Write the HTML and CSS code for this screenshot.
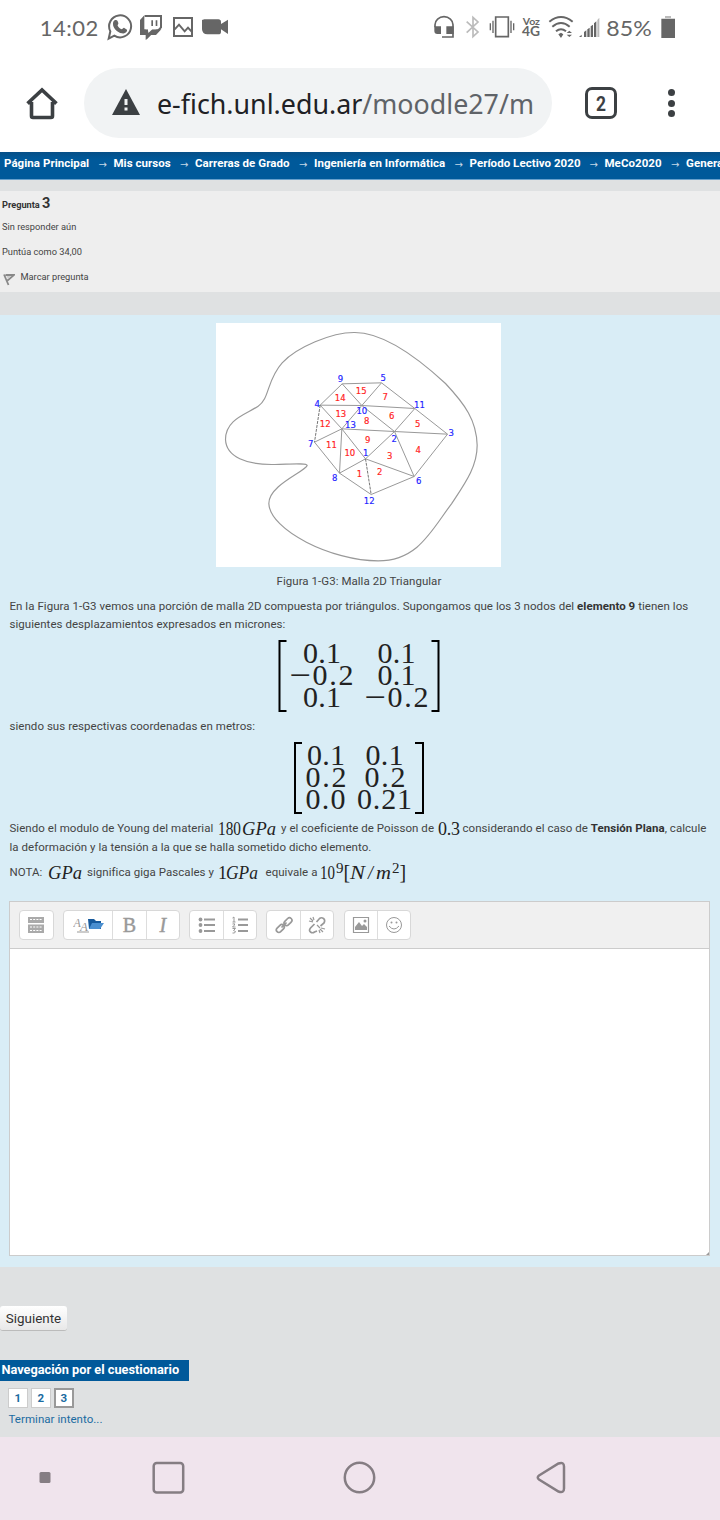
FILE: index.html
```html
<!DOCTYPE html>
<html lang="es">
<head>
<meta charset="utf-8">
<title>Cuestionario</title>
<link rel="stylesheet" href="styles.css">
</head>
<body>
<header class="status">
  <svg class="status-half" viewBox="0 0 1080 156">
    <text class="st" x="119" y="107" font-size="66" textLength="176">14:02</text>
    <g fill="none" stroke="#666" stroke-width="6">
      <path d="M326 116l5-22a33 33 0 1 1 12 13z"/>
      <path d="M522 54h54v54h-54z"/>
      <path d="M524 88l13-14 17 20 10-11 11 12"/>
      <path d="M434 48h49v34l-17 18h-13l-13 13v-13h-12"/>
    </g>
    <path fill="#666" d="M344 61c6-3 9 0 11 8 1 4-3 5-2 8 3 6 7 9 12 11 3 0 5-6 8-4l8 5c2 7-8 12-15 11-15-3-28-17-27-29 0-5 2-8 5-10zM420 60l13-14v42h12v11l12-11h27l-16 17h-15l-14 14v-14h-19zM606 60q6-1 7-2h42q8 0 8 8v6l21-13v43l-21-14v7q0 8-8 8h-33q-15 0-16-15z"/>
    <path fill="#fff" d="M437 51h42v27l-12 10h-14l-9 8v-8h-7z"/>
    <path fill="#666" d="M454 61h5v17h-5zM467 61h5v17h-5z"/>
  </svg>
  <svg class="status-half" viewBox="0 0 1080 156">
    <g fill="none" stroke="#666" stroke-width="5">
      <path d="M225 82v-8a27 24 0 0 1 54 0v37h-33"/>
      <path d="M407 51h38v59h-38z"/>
      <path d="M399 62v37M391 70v21M453 62v37M461 70v21" stroke-width="4"/>
      <path d="M568 65q35-28 70 0M577 80q26-22 52 0M588 94q15-13 30 0" stroke-width="6"/>
      <path stroke="#bbb" d="M320 65l34 31-15 14V52l15 14-34 32"/>
    </g>
    <path fill="#666" d="M223 79h20v23h-11q-9 0-9-9zM259 79h22v23h-22zM595 103l8-5 7 5-7 11zM620 99l8-7 8 7zM620 104h16l-8 7zM657 111l8-7v7zM672 111V96l7-5v20zM682 111V88l7-5v28zM692 111V79l7-5v37zM702 111V70l7-6v47zM904 56h41v58h-41z"/>
    <path fill="#bbb" d="M712 60l6-7v58h-6zM915 48h18v7h-18z"/>
    <text class="st b" x="488" y="74" font-size="28" textLength="52" lengthAdjust="spacingAndGlyphs">Voz</text>
    <text class="st b" x="486" y="108" font-size="42" textLength="54" lengthAdjust="spacingAndGlyphs">4G</text>
    <text class="st" x="739" y="107" font-size="66" textLength="136" lengthAdjust="spacingAndGlyphs">85%</text>
  </svg>
</header>
<div class="browser">
  <svg class="home" viewBox="0 0 36 36"><path d="M7.500 17V31q0 1.500 1.500 1.500h18q1.500 0 1.500-1.500V17M3.500 18.500L18 5 32.500 18.500M4 17.700h4M28 17.700h4" fill="none" stroke="#3c4043" stroke-width="3.600"/></svg>
  <div class="url">
    <svg class="warn" viewBox="0 0 28 26"><path fill="#3c4043" d="M14 0l14 26H0z"/><path stroke="#f1f3f4" stroke-width="3" d="M14 10v6M14 18.500v3"/></svg>
    <svg class="address" viewBox="0 0 380 40"><text x="0" y="31" font-size="26.500" textLength="377" lengthAdjust="spacingAndGlyphs"><tspan fill="#202124">e-fich.unl.edu.ar</tspan><tspan fill="#5f6368">/moodle27/m</tspan></text></svg>
  </div>
  <div class="tabs"><svg viewBox="0 0 10 17"><text x="0" y="15.500" textLength="10" lengthAdjust="spacingAndGlyphs">2</text></svg></div>
  <div class="dots"><i></i><i></i><i></i></div>
</div>
<nav class="crumbs">
  <span class="c1">Página Principal</span><b>→</b><span class="c2">Mis cursos</span><b>→</b><span class="c3">Carreras de Grado</span><b>→</b><span class="c4">Ingeniería en Informática</span><b>→</b><span class="c5">Período Lectivo 2020</span><b>→</b><span class="c6">MeCo2020</span><b>→</b><span>General</span>
</nav>
<section class="info">
  <h3>Pregunta <span>3</span></h3>
  <p>Sin responder aún</p>
  <p>Puntúa como 34,00</p>
  <p class="flag"><svg viewBox="0 0 12 13"><path d="M1 1.500L5.500 12M2.500 2h8.500L4.500 7.500" fill="none" stroke="#888" stroke-width="1.800"/><path d="M3.500 3h5l-3.500 3z" fill="#ccc"/></svg>Marcar pregunta</p>
</section>
<main class="question">
  <svg class="mesh" viewBox="3.500 9 855 731">
    <g fill="none" stroke="#999" stroke-width="3.500">
      <path d="M420 37C350 36 245 82 202 128C155 180 165 235 130 258C95 282 32 297 32 358C34 410 95 435 180 433C230 432 275 428 277 436C270 455 162 495 162 550C165 630 350 722 490 722C610 722 650 630 710 551C750 490 787 440 787 375C785 300 750 252 692 190C600 105 500 37 420 37Z"/>
      <path stroke-width="3" d="M382 191L500 188 600 265 698 342 598 469 469 523 374 459 299 366M316 255L382 191M316 255L441 256 600 265M382 191L441 256 500 188M441 256L381 326 316 255M381 326L539 334 698 342M441 256L539 334 600 265M299 366L381 326 374 459 452 416 381 326M452 416L539 334 598 469 452 416"/>
      <path stroke="#777" stroke-width="3" stroke-dasharray="9 3" d="M452 416l17 107M316 255l-17 111"/>
    </g>
    <g class="node">
      <text x="377" y="187">9</text><text x="505" y="184">5</text><text x="307" y="261">4</text><text x="441" y="283">10</text><text x="614" y="263">11</text><text x="407" y="324">13</text><text x="709" y="349">3</text><text x="538" y="367">2</text><text x="288" y="380">7</text><text x="453" y="408">1</text><text x="360" y="483">8</text><text x="612" y="491">6</text><text x="463" y="551">12</text>
    </g>
    <g class="elem">
      <text x="439" y="222">15</text><text x="376" y="242">14</text><text x="511" y="239">7</text><text x="378" y="291">13</text><text x="531" y="297">6</text><text x="456" y="311">8</text><text x="331" y="322">12</text><text x="609" y="322">5</text><text x="459" y="370">9</text><text x="350" y="383">11</text><text x="610" y="398">4</text><text x="405" y="409">10</text><text x="525" y="416">3</text><text x="495" y="466">2</text><text x="434" y="472">1</text>
    </g>
  </svg>
  <p class="caption">Figura 1-G3: Malla 2D Triangular</p>
  <p class="t1"><span class="l1">En la Figura 1-G3 vemos una porción de malla 2D compuesta por triángulos. Supongamos que los 3 nodos del <strong>elemento 9</strong> tienen los</span><br>siguientes desplazamientos expresados en micrones:</p>
  <svg class="matrix m1" viewBox="278 640 162 72">
    <path d="M286.500 641h-7v70h7M431.500 641h7v70h-7"/>
    <text x="303" y="662.700" textLength="38">0.1</text><text class="minus" x="290" y="685" textLength="21" lengthAdjust="spacingAndGlyphs">−</text><text x="312.500" y="685" textLength="41">0.2</text><text x="303" y="707.300" textLength="38">0.1</text>
    <text x="377.500" y="662.700" textLength="38">0.1</text><text x="377.500" y="685" textLength="38">0.1</text><text class="minus" x="365" y="707.300" textLength="21" lengthAdjust="spacingAndGlyphs">−</text><text x="387.500" y="707.300" textLength="41">0.2</text>
  </svg>
  <p class="t2">siendo sus respectivas coordenadas en metros:</p>
  <svg class="matrix m2" viewBox="294 742 130 72">
    <path d="M302 743h-7v70h7M415 743h8v70h-8"/>
    <text x="307" y="764.700" textLength="38">0.1</text><text x="305.500" y="787" textLength="41">0.2</text><text x="305.500" y="809.300" textLength="40">0.0</text>
    <text x="365.500" y="764.700" textLength="38">0.1</text><text x="364.500" y="787" textLength="41">0.2</text><text x="357" y="809.300" textLength="55">0.21</text>
  </svg>
  <p class="t3"><span class="s1">Siendo el modulo de Young del material</span><svg class="fx f1" viewBox="0 0 59 18"><text y="16" x="0" textLength="23" lengthAdjust="spacingAndGlyphs">180</text><text class="it" x="24" y="16" textLength="34" lengthAdjust="spacingAndGlyphs">GPa</text></svg><span class="s2">y el coeficiente de Poisson de</span><svg class="fx f2" viewBox="0 0 22 18"><text y="16" textLength="22">0.3</text></svg><span>considerando el caso de <strong>Tensión Plana</strong>, calcule</span></p>
  <p class="t4">la deformación y la tensión a la que se halla sometido dicho elemento.</p>
  <p class="t5"><span class="s3">NOTA:</span><svg class="fx f3" viewBox="0 0 34 18"><text class="it" y="16" textLength="34" lengthAdjust="spacingAndGlyphs">GPa</text></svg><span class="s4">significa giga Pascales y</span><svg class="fx f4" viewBox="0 0 41 18"><text y="16">1</text><text class="it" x="8" y="16" textLength="32" lengthAdjust="spacingAndGlyphs">GPa</text></svg><span class="s5">equivale a</span><svg class="fx f5" viewBox="0 0 86 24"><text y="20" textLength="15" lengthAdjust="spacingAndGlyphs">10</text><text class="sup" x="16" y="13.500">9</text><text class="br" x="23.500" y="20">[</text><text class="it" x="30" y="20" textLength="15" lengthAdjust="spacingAndGlyphs">N</text><text class="it" x="48" y="20">/</text><text class="it" x="56" y="20" textLength="15" lengthAdjust="spacingAndGlyphs">m</text><text class="sup" x="72" y="13.500">2</text><text class="br" x="79.500" y="20">]</text></svg></p>
  <div class="editor">
    <div class="tools">
      <div class="grp"><span><svg viewBox="0 0 18 18"><path fill="#aaa" d="M1 1h16v6H1zM1 8.500h16V17H1z"/><path stroke="#fff" stroke-dasharray="2 1.200" d="M3 3.500h12M3 11h12M3 14.500h12"/></svg></span></div>
      <div class="grp"><span class="wide"><svg class="font" viewBox="0 0 31 18"><text x="0.500" y="11" font-size="12" class="fa">A</text><text x="7" y="14.500" font-size="13" class="fa">A</text><path d="M4 16h12" stroke="#999"/><path fill="#175a9c" d="M15 3h6l2 2h5v8H16z"/><path fill="#4a8fd0" d="M19 7h12l-4 6H16z"/></svg></span><span class="bold">B</span><span class="ital">I</span></div>
      <div class="grp"><span><svg viewBox="0 0 18 18"><path stroke="#999" stroke-width="2" d="M6 3.500h11M6 9h11M6 15h11"/><circle cx="2.500" cy="3.500" r="1.900"/><circle cx="2.500" cy="9" r="1.900"/><circle cx="2.500" cy="15" r="1.900"/></svg></span><span><svg viewBox="0 0 18 18"><path stroke="#999" stroke-width="1.800" d="M7 3.500h10M7 9h10M7 15h10"/><path fill="none" stroke="#999" d="M1.500 2l1.500-1v5M1.500 6h3M1.500 8q3-1 2 1l-2 2h3M1.500 12.500h3l-2 2 2 1-1 1.500h-2"/></svg></span></div>
      <div class="grp"><span><svg viewBox="0 0 18 18"><g fill="none" stroke="#999" stroke-width="1.700"><rect x="8.500" y="3.200" width="9" height="5" rx="2.500" transform="rotate(-45 13 5.700)"/><rect x="0.800" y="10" width="9" height="5" rx="2.500" transform="rotate(-45 5.300 12.500)"/><path d="M6.500 11.500l5-5"/></g></svg></span><span><svg viewBox="0 0 18 18"><g fill="none" stroke="#999" stroke-width="1.700"><path d="M8.500 6l3-3.500q2-1.500 4 0t.5 4.500l-3.500 3M9 15l-2.500 1q-2 1.500-4 0t0-4l4-4"/><path stroke-width="1.200" d="M5 1l1 3M1 5l4 1M2 2l3 3M12 13l3 3M11 14l1 3M13 12l4 1M9 9l3 3"/></g></svg></span></div>
      <div class="grp"><span><svg viewBox="0 0 18 18"><path fill="none" stroke="#999" stroke-width="1.200" d="M1.500 1.500h15v15h-15z"/><path fill="#999" d="M3 14v-3l4-5 3 4 2-2 3 3v3z"/><circle cx="13" cy="5" r="1.500"/></svg></span><span><svg viewBox="0 0 18 18"><circle class="face" cx="9" cy="9" r="7.500"/><circle cx="6.500" cy="6.500" r="1"/><circle cx="11.500" cy="6.500" r="1"/><path fill="none" stroke="#999" d="M4 10q5 6 10 0"/></svg></span></div>
    </div>
    <div class="area"><svg viewBox="0 0 4 4"><path d="M0 4L4 0v4z" fill="#999"/></svg></div>
  </div>
</main>
<section class="after">
  <button class="next">Siguiente</button>
  <h2>Navegación por el cuestionario</h2>
  <div class="pages"><a>1</a><a>2</a><a class="on">3</a></div>
  <a class="finish">Terminar intento...</a>
</section>
<footer class="android">
  <svg viewBox="0 0 720 83"><rect x="39.500" y="35" width="11" height="11" rx="1.500" fill="#857d83"/><g fill="none" stroke="#857d83" stroke-width="2.500"><rect x="153.700" y="26" width="29.500" height="29.500" rx="3"/><circle cx="359.500" cy="40.500" r="14.700"/><path d="M539 38.500l19.500-12q5.500-2 5.500 3v22q0 5-5.500 3l-19.500-12q-2.500-2 0-4z"/></g></svg>
</footer>
</body>
</html>
```
FILE: styles.css
```css
* { box-sizing: border-box; }
body { margin: 0; width: 720px; height: 1520px; overflow: hidden; background: #dfe1e2; color: #444; font: 11.5px/18px Roboto, sans-serif; }
p, h2, h3 { margin: 0; }
svg { display: block; }
.status { display: flex; height: 52px; background: #fff; }
.status-half { width: 360px; height: 52px; }
.st { font-family: Lato, sans-serif; fill: #666; }
.st.b { font-weight: 700; }
.browser { height: 100px; background: #fff; display: flex; align-items: center; padding: 2px 0 0 24px; }
.home { width: 36px; height: 36px; }
.url { width: 468px; height: 70px; margin-left: 24px; border-radius: 35px; background: #f1f3f4; display: flex; align-items: center; padding-left: 28px; }
.warn { width: 28px; height: 26px; margin-top: -2px; }
.address { width: 380px; height: 40px; margin-left: 17px; font-family: "Noto Sans", sans-serif; }
.tabs { width: 32px; height: 32px; margin-left: 33px; border: 3.5px solid #3c4043; border-radius: 7px; display: flex; align-items: center; justify-content: center; }
.tabs svg { width: 10px; height: 17px; font: bold 20px Roboto, sans-serif; fill: #3c4043; overflow: visible; }
.dots { margin-left: 50.500px; display: grid; gap: 3.5px; }
.dots i { width: 7px; height: 7px; border-radius: 50%; background: #3c4043; }
.crumbs { height: 28px; background: linear-gradient(#064f87, #00599a 7px); border-bottom: 1px solid #68a0cc; display: flex; padding: 2px 0 0 4px; color: #fff; font-weight: 700; white-space: nowrap; letter-spacing: 0.05px; }
.crumbs b { width: 24px; flex: none; padding-left: 9px; font: 10px/21px "DejaVu Sans", sans-serif; color: #c5d8e7; }
.crumbs span { flex: none; }
.c1 { width: 85.5px; } .c2 { width: 57.5px; } .c3 { width: 95px; } .c4 { width: 131.500px; } .c5 { width: 111px; } .c6 { width: 57.5px; }
.info { margin-top: 11px; height: 101px; background: #eee; padding: 4px 0 0 2px; font-size: 9.25px; }
.info h3 { font-size: 9.2px; line-height: 18px; color: #333; }
.info h3 span { font-size: 14.5px; }
.info p { line-height: 18px; margin-bottom: 7px; }
.info h3 + p { margin-top: 4px; }
.flag { display: flex; align-items: center; }
.flag svg { width: 12px; height: 13px; margin: 4px 6px 0 0.500px; }
.question { margin-top: 23px; height: 952px; background: #d9edf6; padding: 8px 9.5px 0; white-space: nowrap; letter-spacing: 0.045px; }
.mesh { width: 285px; height: 244px; margin-left: 206.500px; background: #fff; letter-spacing: 0; }
.mesh text { font: 25.500px "DejaVu Sans", sans-serif; text-anchor: middle; stroke-width: 0.500; }
.node { fill: #22f; stroke: #22f; }
.elem { fill: #f22; stroke: #f22; }
.caption { margin-top: 5px; padding-left: 267px; }
.t1 { margin-top: 7px; }
strong { color: #333; }
.matrix { height: 72px; overflow: visible; }
.matrix path { fill: none; stroke: #000; stroke-width: 2; }
.matrix text { font: 30px "Liberation Serif", serif; fill: #222; }
.matrix .minus { stroke: #222; stroke-width: 0.3; }
.m1 { width: 162px; margin: 7px 0 5px 268.500px; }
.m2 { width: 130px; margin: 7px 0 5px 284.500px; }
.t3, .t5 { display: flex; }
.fx { height: 18px; flex: none; overflow: visible; font: 18px "Liberation Serif", serif; fill: #222; }
.it { font-style: italic; }
.sup { font-size: 15px; }
.br { font-size: 20px; }
.s1 { width: 208px; } .f1 { width: 59px; } .s2 { width: 156.500px; margin-left: 4.500px; } .f2 { width: 22px; margin-right: 3px; }
.t4 { margin-top: 1px; }
.t5 { margin-top: 7px; }
.s3 { width: 38px; } .f3 { width: 34px; } .s4 { width: 131px; margin-left: 5.500px; } .f4 { width: 41px; } .s5 { width: 54.500px; margin-left: 6.500px; }
.f5 { width: 86px; height: 24px; margin: -4px 0 -2px; }
.editor { margin-top: 20px; width: 701px; height: 355px; border: 1px solid #ccc; display: flex; flex-direction: column; margin-left: -0.500px; letter-spacing: 0; }
.tools { height: 47px; flex: none; background: #f0f0f0; border-bottom: 1px solid #ccc; display: flex; gap: 9.2px; padding: 8px 0 0 9px; }
.grp { height: 30px; display: flex; background: #fff; border: 1px solid #d8d8d8; border-radius: 4px; }
.grp span { width: 32.700px; height: 28px; display: flex; align-items: center; justify-content: center; }
.grp span + span { width: 33.300px; border-left: 1px solid #ddd; }
.grp .wide { width: 48.500px; }
.grp svg { width: 18px; height: 18px; fill: #999; }
.grp .font { width: 31px; }
.grp .face { fill: none; stroke: #999; }
.fa { font-family: "Liberation Serif", serif; font-style: italic; }
.bold, .ital { font: 20px "Liberation Serif", serif; color: #999; -webkit-text-stroke: 0.4px #999; }
.ital { font-style: italic; }
.area { flex: 1; background: #fff; display: flex; align-items: flex-end; justify-content: flex-end; }
.area svg { width: 3px; height: 3px; }
.after { height: 170px; padding-top: 39px; }
.next { display: block; width: 67px; height: 25px; padding: 0; border: 0; border-bottom: 1px solid #bbb; border-radius: 3px; background: linear-gradient(#fff, #e8e8e8); color: #333; font: 13.4px/25px Roboto, sans-serif; }
.after h2 { margin-top: 29px; width: 189px; height: 21px; background: #00599a; color: #fff; font-size: 12.75px; line-height: 20px; padding-left: 1.500px; }
.pages { display: flex; gap: 3.500px; padding: 7px 0 0 8px; }
.pages a { width: 19.500px; height: 20px; background: #fff; border: 1px solid #ccc; text-align: center; font-weight: 700; line-height: 18px; color: #1b6ba1; }
.pages .on { border: 2px solid #999; line-height: 16px; }
.finish { display: block; padding: 2px 0 0 8.500px; color: #1b6ba1; letter-spacing: 0.04px; }
.android { height: 83px; background: #f0e4ed; }
```
